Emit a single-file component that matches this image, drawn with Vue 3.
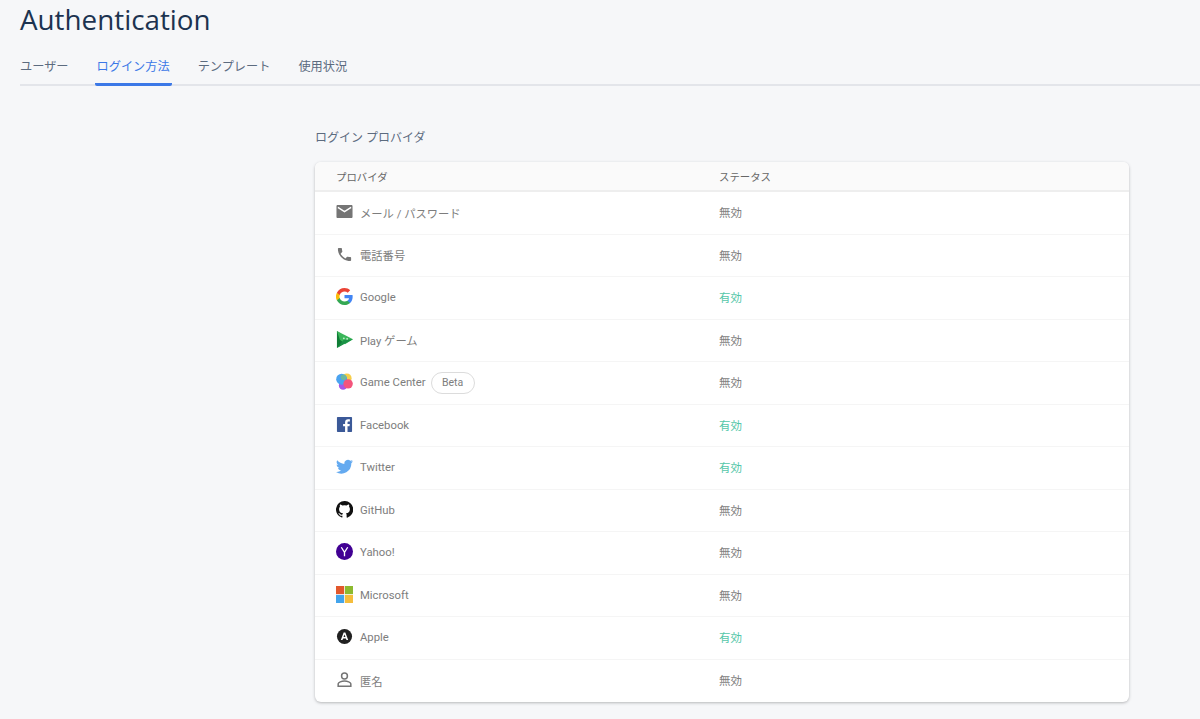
<script setup>
const tabs = [
  { label: 'ユーザー', active: false },
  { label: 'ログイン方法', active: true },
  { label: 'テンプレート', active: false },
  { label: '使用状況', active: false },
]
const rows = [
  { id: 'mail', name: 'メール / パスワード', on: false },
  { id: 'phone', name: '電話番号', on: false },
  { id: 'google', name: 'Google', on: true },
  { id: 'play', name: 'Play ゲーム', on: false },
  { id: 'gc', name: 'Game Center', on: false, beta: true },
  { id: 'fb', name: 'Facebook', on: true },
  { id: 'tw', name: 'Twitter', on: true },
  { id: 'gh', name: 'GitHub', on: false },
  { id: 'yh', name: 'Yahoo!', on: false },
  { id: 'ms', name: 'Microsoft', on: false },
  { id: 'ap', name: 'Apple', on: true },
  { id: 'an', name: '匿名', on: false },
]
</script>

<template>
  <div class="page">
    <h1 class="title">Authentication</h1>
    <nav class="tabs">
      <a v-for="t in tabs" :key="t.label" class="tab" :class="{ active: t.active }">{{ t.label }}</a>
    </nav>
    <section class="content">
      <h2 class="section-title">ログイン プロバイダ</h2>
      <div class="card">
        <div class="row head">
          <div class="c1">プロバイダ</div>
          <div class="c2">ステータス</div>
        </div>
        <div v-for="r in rows" :key="r.id" class="row body">
          <div class="c1">
            <svg class="icon" viewBox="0 0 18 18" width="18" height="18">
              <template v-if="r.id === 'mail'">
                <path fill="#757575" d="M1.800 2h14.400c.7 0 1.300.6 1.300 1.300v11.400c0 .7-.6 1.300-1.300 1.300H1.800C1.100 16 .5 15.400.5 14.700V3.300C.5 2.600 1.100 2 1.800 2z" />
                <path fill="none" stroke="#fff" stroke-width="1.500" d="M2 4.700 9 9.200l7-4.500" />
              </template>
              <path v-else-if="r.id === 'phone'" fill="#757575" d="M4.900 8.100c1.100 2.200 2.900 4 5.100 5.100l1.700-1.700c.2-.2.500-.3.800-.2.900.3 1.800.4 2.700.4.400 0 .8.300.8.800v2.700c0 .4-.4.800-.8.800C7.900 16 2 10.100 2 2.800c0-.4.400-.8.800-.8h2.700c.5 0 .8.400.8.800 0 1 .1 1.900.4 2.700.1.300 0 .6-.2.800L4.900 8.100z" />
              <template v-else-if="r.id === 'google'">
                <path fill="#4285F4" d="M17.640 9.200c0-.64-.06-1.250-.16-1.840H9v3.480h4.840a4.140 4.140 0 0 1-1.800 2.720v2.260h2.920c1.700-1.570 2.680-3.880 2.680-6.620z" />
                <path fill="#34A853" d="M9 18c2.430 0 4.470-.8 5.960-2.180l-2.920-2.260c-.8.540-1.840.86-3.040.86-2.340 0-4.330-1.580-5.040-3.710H.96v2.330A9 9 0 0 0 9 18z" />
                <path fill="#FBBC05" d="M3.960 10.710A5.400 5.400 0 0 1 3.680 9c0-.59.100-1.170.28-1.710V4.960H.96a9 9 0 0 0 0 8.080l3-2.330z" />
                <path fill="#EA4335" d="M9 3.580c1.320 0 2.510.45 3.440 1.350l2.580-2.580C13.460.890 11.430 0 9 0A9 9 0 0 0 .96 4.960l3 2.330C4.670 5.160 6.660 3.580 9 3.580z" />
              </template>
              <template v-else-if="r.id === 'play'">
                <path fill="#0f7d36" d="M1 0v18l8.500-5.500V6z" />
                <path fill="#3bb65a" d="M1 0 18 8.800 9.500 14 4 9z" />
                <path fill="#1a9146" d="M1 18 8 9.500l10-.7z" />
                <circle cx="8.300" cy="7.800" r="1" fill="#bfeccb" />
                <circle cx="11.800" cy="8.300" r="1" fill="#bfeccb" />
              </template>
              <template v-else-if="r.id === 'gc'">
                <circle cx="11.500" cy="5.500" r="5" fill="#f6cf4a" />
                <circle cx="7.500" cy="13.200" r="4.500" fill="#a855e8" />
                <circle cx="6" cy="6.600" r="5.800" fill="#4aa3f0" />
                <circle cx="8" cy="4.500" r="3" fill="#7cc07a" opacity=".7" />
                <circle cx="12.800" cy="11.500" r="5" fill="#f4547c" />
              </template>
              <template v-else-if="r.id === 'fb'">
                <rect x="1" y="1" width="16" height="16" rx=".8" fill="#3b5998" />
                <path fill="#fff" d="M12.200 17v-6.200h2.100l.3-2.400h-2.400V6.900c0-.7.200-1.200 1.200-1.200h1.300V3.500c-.2 0-1-.1-1.900-.1-1.900 0-3.200 1.100-3.200 3.300v1.700H7.500v2.400h2.100V17z" />
              </template>
              <path v-else-if="r.id === 'tw'" fill="#64aaf0" d="M18 3.500c-.7.300-1.400.5-2.100.6.800-.5 1.300-1.200 1.600-2-.7.400-1.500.7-2.300.9A3.700 3.700 0 0 0 8.900 6.300 10.500 10.500 0 0 1 1.300 2.500a3.700 3.700 0 0 0 1.100 4.900c-.6 0-1.200-.2-1.700-.5 0 1.800 1.300 3.300 3 3.700-.5.100-1.100.2-1.700.1.500 1.500 1.800 2.500 3.400 2.600A7.400 7.400 0 0 1 0 14.800 10.500 10.500 0 0 0 16.200 5.500c.7-.5 1.300-1.200 1.800-2z" />
              <path v-else-if="r.id === 'gh'" fill="#111" d="M9 0a9 9 0 0 0-2.850 17.540c.45.080.62-.2.620-.43v-1.600c-2.500.54-3.030-1.060-3.030-1.060-.41-1.040-1-1.320-1-1.320-.82-.56.060-.55.060-.55.900.060 1.380.930 1.380.930.800 1.370 2.100.970 2.610.740.080-.580.310-.970.570-1.200-2-.230-4.100-1-4.100-4.450 0-.980.350-1.790.930-2.420-.090-.230-.400-1.140.090-2.380 0 0 .760-.240 2.470.920a8.600 8.600 0 0 1 4.500 0c1.720-1.160 2.470-.920 2.470-.920.490 1.240.180 2.150.090 2.380.580.630.930 1.440.930 2.420 0 3.460-2.100 4.220-4.110 4.440.320.280.610.830.610 1.670v2.470c0 .240.160.520.620.430A9 9 0 0 0 9 0z" />
              <template v-else-if="r.id === 'yh'">
                <circle cx="9" cy="9" r="9" fill="#410093" />
                <path fill="none" stroke="#fff" stroke-width="1.400" d="M5.600 4.500 9 9.800l3.400-5.300M9 9.800v4.200" />
              </template>
              <template v-else-if="r.id === 'ms'">
                <rect width="8.600" height="8.600" fill="#e2582c" />
                <rect x="9.400" width="8.600" height="8.600" fill="#8cba2f" />
                <rect y="9.400" width="8.600" height="8.600" fill="#42a4ec" />
                <rect x="9.400" y="9.400" width="8.600" height="8.600" fill="#f5bd3c" />
              </template>
              <template v-else-if="r.id === 'ap'">
                <circle cx="9" cy="9" r="8" fill="#212121" />
                <path fill="#fff" d="M8.100 4.800h1.800l3 7.900h-1.800l-.6-1.700H7.500l-.6 1.700H5.100zM9 6.900 8 9.600h2z" />
              </template>
              <path v-else fill="none" stroke="#757575" stroke-width="1.600" d="M9 2.200a3.100 3.100 0 1 1 0 6.200 3.100 3.100 0 0 1 0-6.200zM9 10.600c3 0 6.700 1.300 6.700 3v2.600H2.300v-2.600c0-1.700 3.700-3 6.700-3z" />
            </svg>
            <span class="name">{{ r.name }}</span>
            <span v-if="r.beta" class="beta">Beta</span>
          </div>
          <div class="c2" :class="{ on: r.on }">{{ r.on ? '有効' : '無効' }}</div>
        </div>
      </div>
    </section>
  </div>
</template>

<style>
html, body { margin: 0; background: #f6f7f9; overflow: hidden; }
</style>

<style scoped>
.page {
  height: 719px;
  box-sizing: border-box;
  padding: 0 0 0 20px;
  background: #f6f7f9;
  font-family: Roboto, "Noto Sans CJK JP", sans-serif;
  overflow: hidden;
}
.title {
  margin: 0;
  height: 40px;
  line-height: 38px;
  font-family: "Open Sans", sans-serif;
  font-size: 27.800px;
  font-weight: 500;
  color: #1c3350;
}
.tabs {
  display: flex;
  height: 46px;
  box-sizing: border-box;
  border-bottom: 2px solid #e3e5ea;
  padding-top: 1px;
}
.tab {
  box-sizing: border-box;
  height: 45px;
  line-height: 52px;
  font-size: 12.200px;
  color: #5c6b7f;
  margin-right: 28px;
  white-space: nowrap;
}
.tab.active {
  color: #3b78e7;
  border-bottom: 3px solid #3b78e7;
  border-radius: 0 0 2px 2px;
  padding: 0 2px;
  margin: 0 26px 0 -2px;
}
.content {
  margin: 44px 71px 0 295px;
}
.section-title {
  margin: 0;
  height: 32px;
  line-height: 16px;
  font-size: 12px;
  font-weight: 400;
  color: #5c6b7f;
}
.card {
  background: #fff;
  border-radius: 6px;
  box-shadow: 0 1px 3px rgba(60, 64, 67, .35);
  overflow: hidden;
}
.row {
  display: flex;
  align-items: center;
  box-sizing: border-box;
  padding-left: 21px;
  font-size: 11.300px;
  color: #7d7d7d;
}
.head {
  height: 30px;
  background: #fafafa;
  border-bottom: 2px solid #eeeeee;
  font-size: 10.400px;
  color: #666;
}
.body {
  height: 42.500px;
  border-bottom: 1px solid #f5f5f5;
}
.body:last-child { border-bottom: 0; }
.c1 {
  width: 383px;
  display: flex;
  align-items: center;
}
.icon {
  flex: none;
  width: 17px;
  height: 17px;
  margin-right: 7px;
  margin-top: -2px;
}
.name { white-space: nowrap; }
.beta {
  box-sizing: border-box;
  margin-left: 5px;
  width: 44px;
  height: 22px;
  line-height: 20px;
  text-align: center;
  border: 1px solid #dcdcdc;
  border-radius: 11px;
  font-size: 10.500px;
  color: #7d7d7d;
}
.c2 { color: #808080; font-size: 11.500px; margin-top: -1px; }
.head .c2 { color: #666; font-size: 10.400px; margin-top: 0; }
.c2.on { color: #55c7a9; }
</style>
